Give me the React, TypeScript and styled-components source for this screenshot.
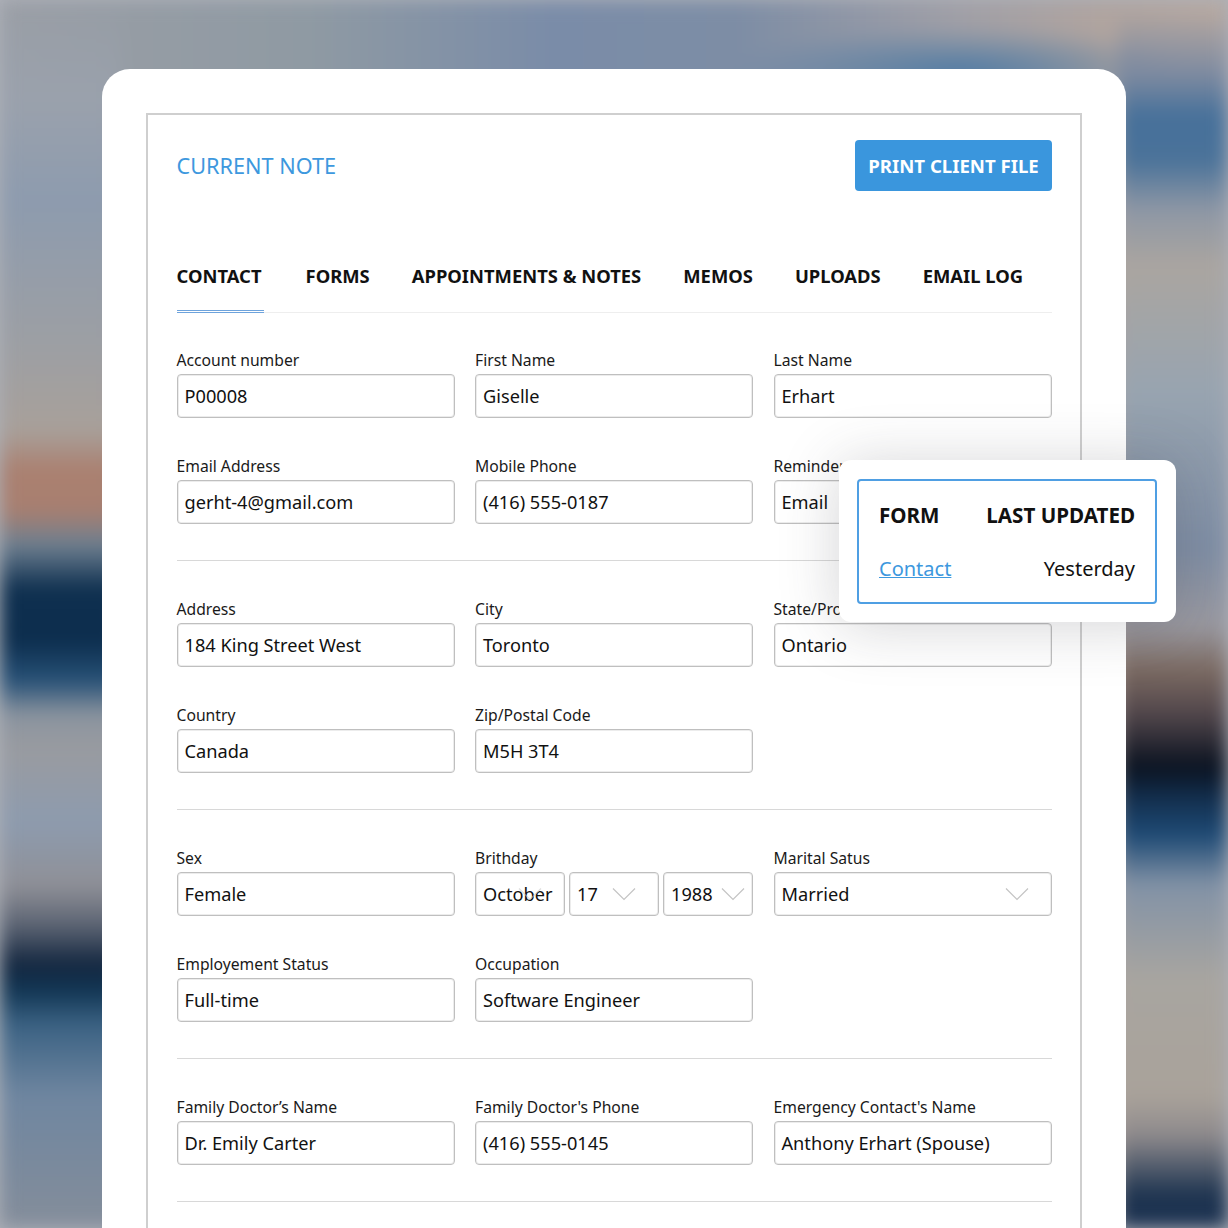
import styled, { createGlobalStyle } from 'styled-components'

const GlobalStyle = createGlobalStyle`
  html, body {
    margin: 0;
    padding: 0;
    background: #aeb1b9;
  }
  * {
    box-sizing: border-box;
  }
`

const leftStrip = `linear-gradient(180deg,
  rgba(154, 161, 172, 0) 0px, #9aa1ac 100px, #8d9bae 200px, #9d9fa3 350px, #a8a09a 430px,
  #aa8070 470px, #a87f70 510px, #6d7f90 545px, #0e2f4f 590px, #0c2d4d 640px, #265076 680px,
  #8b949f 715px, #999ba0 750px, #8d9bae 822px, #8f9097 885px, #5c6473 925px, #13263f 965px,
  #113553 990px, #3b6283 1025px, #6f86a0 1096px, #848d9a 1228px)`

const rightStrip = `linear-gradient(180deg,
  rgba(125, 138, 160, 0) 10px, #7d8aa0 75px, #46709a 117px, #4a7299 160px, #8e97a5 210px,
  #aaa5a0 266px, #98a4b0 391px, #7f8ea5 548px, #9a99a0 626px, #7b6a62 670px, #50454a 715px,
  #0a1220 767px, #133050 800px, #1e4a75 835px, #8292a6 885px, #a8a5a0 979px, #a9a29a 1096px,
  #8e8a8c 1135px, #1e3450 1195px, #1a3050 1228px)`

const Page = styled.div`
  position: relative;
  z-index: 0;
  height: 1228px;
  overflow: hidden;
  padding: 69px 102px 0;
  font-family: 'Noto Sans', 'Liberation Sans', sans-serif;
  color: #111111;
`

// -- Blurred photo behind the card, painted with gradients --
const Backdrop = styled.div`
  position: absolute;
  top: 0;
  left: 0;
  z-index: -1;
  width: 1228px;
  height: 1228px;
  filter: blur(9px);
  background-image:
    ${leftStrip},
    ${rightStrip},
    radial-gradient(ellipse 230px 45px at 960px 72px, #4f7aa3 0%, rgba(79, 122, 163, 0) 100%),
    linear-gradient(90deg, #9a9ea5 0%, #8f9aa3 25%, #7a8ca8 45%, #7d8da5 60%, #a09fa6 78%, #b0a49f 90%, #b8a9a0 100%);
  background-size: 120px 100%, 110px 100%, 100% 100%, 100% 100%;
  background-position: 0 0, right 0 top 0, 0 0, 0 0;
  background-repeat: no-repeat;
`

const Card = styled.main`
  height: 1300px;
  padding: 44px 44px 0;
  background-color: #ffffff;
  border-radius: 28px 28px 0 0;
`

const Frame = styled.div`
  height: 1300px;
  padding: 24px 28px 0 28.5px;
  border: 2px solid #cfcfcf;
`

// -- Header --
const Header = styled.header`
  display: flex;
  align-items: center;
  justify-content: space-between;
  height: 53px;
`

const Title = styled.h1`
  margin: 0;
  font-size: 21.7px;
  font-weight: 400;
  color: #3d98de;
`

const PrintButton = styled.button`
  height: 51px;
  width: 197px;
  padding: 0;
  border: none;
  border-radius: 4px;
  background-color: #3a96dd;
  color: #ffffff;
  font-family: inherit;
  font-size: 18.6px;
  font-weight: 700;
`

// -- Tabs --
const Tabs = styled.nav`
  display: flex;
  gap: 42px;
  height: 64px;
  margin: 57px 0 -1px;
  border-bottom: 1px solid #eeeeee;
`

const Tab = styled.span<{ $active?: boolean }>`
  height: 64px;
  padding-top: 14px;
  padding-right: ${(p) => (p.$active ? '2px' : '0')};
  font-size: 18.4px;
  line-height: 25px;
  font-weight: 700;
  border-bottom: ${(p) => (p.$active ? '3px double #6ea3dc' : 'none')};
`

// -- Form --
const Section = styled.section`
  display: grid;
  grid-template-columns: repeat(3, 278px);
  column-gap: 20.5px;
  row-gap: 38px;
  padding: 38px 0 36px;
  border-bottom: 1px solid #d8d8d8;
`

const Field = styled.div`
  display: flex;
  flex-direction: column;
`

const Label = styled.label`
  height: 24px;
  font-size: 15.7px;
  line-height: 20px;
  white-space: nowrap;
  color: #1a1a1a;
`

const Input = styled.div`
  position: relative;
  height: 44px;
  padding: 0 7px;
  border: 1px solid #bfbfbf;
  border-radius: 4px;
  box-shadow: inset 0 0 0 1px #ececec;
  background-color: #ffffff;
  font-size: 18.2px;
  line-height: 42px;
  white-space: nowrap;
`

const DateRow = styled.div`
  display: grid;
  grid-template-columns: repeat(3, 90px);
  justify-content: space-between;
`

const ChevronIcon = styled.svg<{ $right: number; $faint?: boolean }>`
  position: absolute;
  top: 14px;
  right: ${(p) => p.$right}px;
  width: 24px;
  height: 14px;
  fill: none;
  stroke: #c4c4c4;
  stroke-width: 1.2;
  opacity: ${(p) => (p.$faint ? 0.55 : 1)};
`

const Chevron = ({ right, faint }: { right: number; faint?: boolean }) => (
  <ChevronIcon $right={right} $faint={faint} viewBox="0 0 24 14">
    <path d="M1 1.5 L12 12.5 L23 1.5" />
  </ChevronIcon>
)

// -- Popover --
const Popover = styled.aside`
  position: absolute;
  top: 460px;
  left: 839px;
  width: 337px;
  height: 162px;
  padding: 19px 19px 18px 18px;
  border-radius: 12px;
  background-color: #ffffff;
  box-shadow: 0 4px 60px rgba(60, 60, 70, 0.22);
`

const PopoverInner = styled.div`
  display: grid;
  grid-template-columns: auto auto;
  justify-content: space-between;
  align-content: start;
  row-gap: 26px;
  height: 125px;
  padding: 20px 20px 0;
  border: 2px solid #4f9fe3;
  border-radius: 4px;
`

const Head = styled.span`
  font-size: 20.6px;
  line-height: 28px;
  font-weight: 700;
`

const Cell = styled.span`
  justify-self: end;
  font-size: 20px;
  line-height: 28px;
`

const ContactLink = styled.a`
  font-size: 20px;
  line-height: 28px;
  color: #3d98de;
  text-decoration: underline;
  text-decoration-thickness: 1px;
`

type FieldData = { label: string; value: string }

const sections: FieldData[][] = [
  [
    { label: 'Account number', value: 'P00008' },
    { label: 'First Name', value: 'Giselle' },
    { label: 'Last Name', value: 'Erhart' },
    { label: 'Email Address', value: 'gerht-4@gmail.com' },
    { label: 'Mobile Phone', value: '(416) 555-0187' },
    { label: 'Reminder Preference', value: 'Email' },
  ],
  [
    { label: 'Address', value: '184 King Street West' },
    { label: 'City', value: 'Toronto' },
    { label: 'State/Province', value: 'Ontario' },
    { label: 'Country', value: 'Canada' },
    { label: 'Zip/Postal Code', value: 'M5H 3T4' },
  ],
]

const doctorFields: FieldData[] = [
  { label: 'Family Doctor’s Name', value: 'Dr. Emily Carter' },
  { label: "Family Doctor's Phone", value: '(416) 555-0145' },
  { label: "Emergency Contact's Name", value: 'Anthony Erhart (Spouse)' },
]

const tabs = ['CONTACT', 'FORMS', 'APPOINTMENTS & NOTES', 'MEMOS', 'UPLOADS', 'EMAIL LOG']

const renderField = (f: FieldData) => (
  <Field key={f.label}>
    <Label>{f.label}</Label>
    <Input>{f.value}</Input>
  </Field>
)

const App = () => (
  <>
    <GlobalStyle />
    <Page>
      <Backdrop />
      <Card>
        <Frame>
          <Header>
            <Title>CURRENT NOTE</Title>
            <PrintButton>PRINT CLIENT FILE</PrintButton>
          </Header>
          <Tabs>
            {tabs.map((t, i) => (
              <Tab key={t} $active={i === 0}>
                {t}
              </Tab>
            ))}
          </Tabs>
          {sections.map((s) => (
            <Section key={s[0].label}>{s.map(renderField)}</Section>
          ))}
          <Section>
            {renderField({ label: 'Sex', value: 'Female' })}
            <Field>
              <Label>Brithday</Label>
              <DateRow>
                <Input>
                  October
                  <Chevron right={22} faint />
                </Input>
                <Input>
                  17
                  <Chevron right={22} />
                </Input>
                <Input>
                  1988
                  <Chevron right={7} />
                </Input>
              </DateRow>
            </Field>
            <Field>
              <Label>Marital Satus</Label>
              <Input>
                Married
                <Chevron right={22} />
              </Input>
            </Field>
            {renderField({ label: 'Employement Status', value: 'Full-time' })}
            {renderField({ label: 'Occupation', value: 'Software Engineer' })}
          </Section>
          <Section>{doctorFields.map(renderField)}</Section>
        </Frame>
      </Card>
      <Popover>
        <PopoverInner>
          <Head>FORM</Head>
          <Head>LAST UPDATED</Head>
          <ContactLink>Contact</ContactLink>
          <Cell>Yesterday</Cell>
        </PopoverInner>
      </Popover>
    </Page>
  </>
)

export default App
